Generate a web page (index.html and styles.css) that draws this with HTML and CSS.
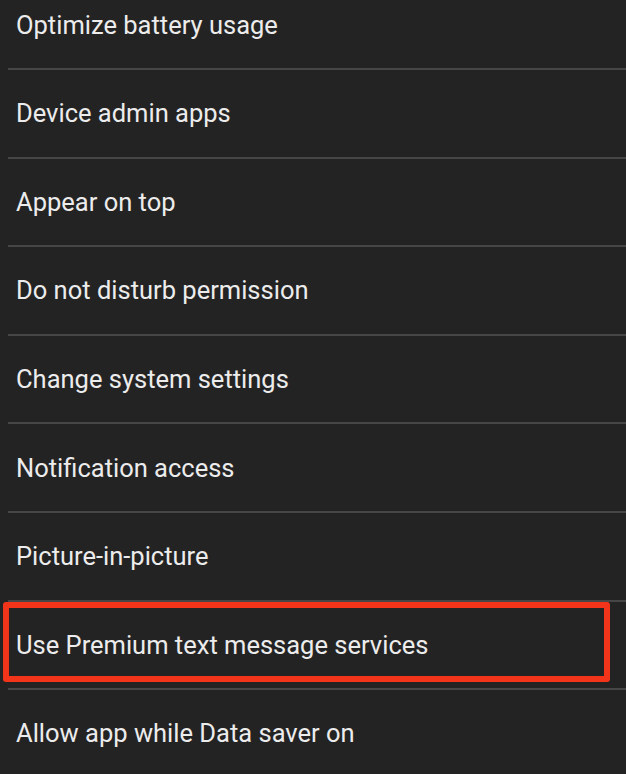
FILE: index.html
```html
<!DOCTYPE html>
<html>
<head>
<meta charset="utf-8">
<link rel="stylesheet" href="styles.css">
</head>
<body>
<div class="screen">
  <ul class="list">
    <li class="row"><span class="label">Optimize battery usage</span></li>
    <li class="row"><span class="label">Device admin apps</span></li>
    <li class="row"><span class="label">Appear on top</span></li>
    <li class="row"><span class="label">Do not disturb permission</span></li>
    <li class="row"><span class="label">Change system settings</span></li>
    <li class="row"><span class="label">Notification access</span></li>
    <li class="row"><span class="label">Picture-in-picture</span></li>
    <li class="row highlighted"><span class="label">Use Premium text message services</span><span class="mark"></span></li>
    <li class="row last"><span class="label">Allow app while Data saver on</span></li>
  </ul>
</div>
</body>
</html>
```
FILE: styles.css
```css
html, body {
  margin: 0;
  padding: 0;
  background: #232323;
}
.screen {
  width: 626px;
  height: 774px;
  overflow: hidden;
  background: #232323;
  font-family: Roboto, "Liberation Sans", sans-serif;
}
.list {
  list-style: none;
  margin: -18.6px 0 0 8px;
  padding: 0;
}
.row {
  position: relative;
  height: 86.6px;
  border-bottom: 2px solid #464646;
  display: flex;
  align-items: center;
  padding-left: 8px;
}
.row.last {
  border-bottom: none;
}
.label {
  color: #ececec;
  font-size: 25.5px;
  letter-spacing: 0;
}
.mark {
  position: absolute;
  left: -5px;
  top: 0;
  width: 595px;
  height: 68px;
  border: 6px solid #f2341a;
  border-radius: 3px;
}
```
